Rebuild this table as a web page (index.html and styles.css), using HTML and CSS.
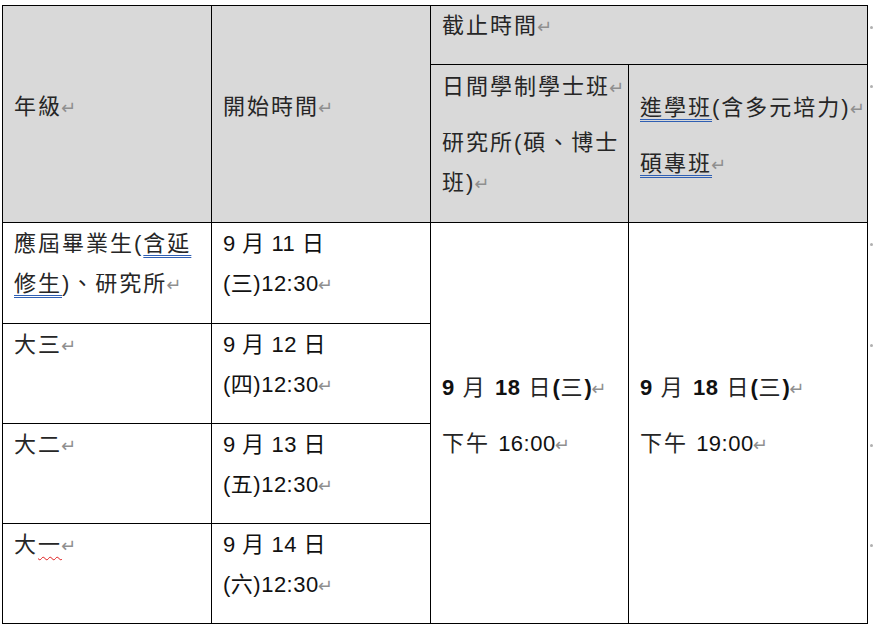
FILE: index.html
```html
<!DOCTYPE html>
<html lang="zh-Hant">
<head>
<meta charset="utf-8">
<title>時間表</title>
<link rel="stylesheet" href="styles.css">
</head>
<body>
<table class="sched">
  <colgroup>
    <col class="c1"><col class="c2"><col class="c3"><col class="c4"><col class="c5">
  </colgroup>
  <tr class="h1">
    <th rowspan="2"><p>年級<span class="pm">↵</span></p></th>
    <th rowspan="2"><p>開始時間<span class="pm">↵</span></p></th>
    <th colspan="2" class="top"><p>截止時間<span class="pm">↵</span></p></th>
    <td class="eor"><span class="dot"></span></td>
  </tr>
  <tr class="h2">
    <th class="sub"><p>日間學制學士班<span class="pm">↵</span></p><p>研究所(碩、博士<br>班)<span class="pm">↵</span></p></th>
    <th><p><span class="dbl">進學班</span>(含多元培力)<span class="pm">↵</span></p><p><span class="dbl">碩專班</span><span class="pm">↵</span></p></th>
    <td class="eor"><span class="dot"></span></td>
  </tr>
  <tr class="r1">
    <td><p>應屆畢業生(<span class="dbl">含延</span><br><span class="dbl">修生</span>)、研究所<span class="pm">↵</span></p></td>
    <td><p class="n">9 月 11 日<br>(三)12:30<span class="pm">↵</span></p></td>
    <td rowspan="4" class="dl"><p><b>9</b> 月 <b>18</b> 日<b>(</b>三<b>)</b><span class="pm">↵</span></p><p>下午 <span class="n">16:00</span><span class="pm">↵</span></p></td>
    <td rowspan="4" class="dl"><p><b>9</b> 月 <b>18</b> 日<b>(</b>三<b>)</b><span class="pm">↵</span></p><p>下午 <span class="n">19:00</span><span class="pm">↵</span></p></td>
    <td class="eor"><span class="dot"></span></td>
  </tr>
  <tr class="r">
    <td><p>大三<span class="pm">↵</span></p></td>
    <td><p class="n">9 月 12 日<br>(四)12:30<span class="pm">↵</span></p></td>
    <td class="eor"><span class="dot"></span></td>
  </tr>
  <tr class="r">
    <td><p>大二<span class="pm">↵</span></p></td>
    <td><p class="n">9 月 13 日<br>(五)12:30<span class="pm">↵</span></p></td>
    <td class="eor"><span class="dot"></span></td>
  </tr>
  <tr class="r">
    <td><p>大<span class="wavy">一</span><span class="pm">↵</span></p></td>
    <td><p class="n">9 月 14 日<br>(六)12:30<span class="pm">↵</span></p></td>
    <td class="eor"><span class="dot"></span></td>
  </tr>
</table>
</body>
</html>
```
FILE: styles.css
```css
html, body {
  background: #ffffff;
}
body {
  margin: 5px 0 0 2px;
  font-family: "Liberation Sans", "Noto Sans CJK TC", sans-serif;
  font-size: 22px;
  color: #262626;
}
.sched {
  border-collapse: collapse;
  table-layout: fixed;
  width: 871px;
}
.c1 { width: 209px; }
.c2 { width: 219px; }
.c3 { width: 198px; }
.c4 { width: 239px; }
.c5 { width: 6px; }

.sched th,
.sched td {
  border: 1px solid #000;
  padding: 1px 8px 0 11px;
  vertical-align: top;
  text-align: left;
  font-weight: normal;
  letter-spacing: 2px;
  line-height: 40px;
  white-space: nowrap;
  overflow: hidden;
}
.sched th {
  background: #d9d9d9;
  vertical-align: middle;
}
.sched th.top {
  vertical-align: top;
  padding-top: 0;
}
.sched th.sub {
  vertical-align: top;
  padding-top: 2px;
}
.sched td.dl {
  vertical-align: middle;
}
.h1 { height: 59px; }
.h2 { height: 158px; }
.r1 { height: 101px; }
.r { height: 100px; }

p {
  margin: 0 0 16px;
}
.n {
  letter-spacing: 0.5px;
  color: #111;
}
b {
  font-weight: bold;
  letter-spacing: 0.5px;
  color: #111;
}
.pm {
  font-family: "DejaVu Sans", sans-serif;
  font-size: 18px;
  line-height: 1;
  color: #8f8f8f;
  letter-spacing: 0;
  margin-left: -1px;
}
.dbl {
  text-decoration: underline double #2f5fb3;
  text-decoration-thickness: 1px;
  text-underline-offset: 4px;
}
.wavy {
  text-decoration: underline wavy #e02020;
  text-decoration-thickness: 1px;
  text-underline-offset: 4px;
}
.sched td.eor {
  border-top: none;
  border-bottom: none;
  border-right: none;
  padding: 20px 0 0 2px;
  line-height: 1;
  background: #fff;
}
.dot {
  display: block;
  width: 3px;
  height: 3px;
  border-radius: 50%;
  background: #b0b0b0;
}
```
